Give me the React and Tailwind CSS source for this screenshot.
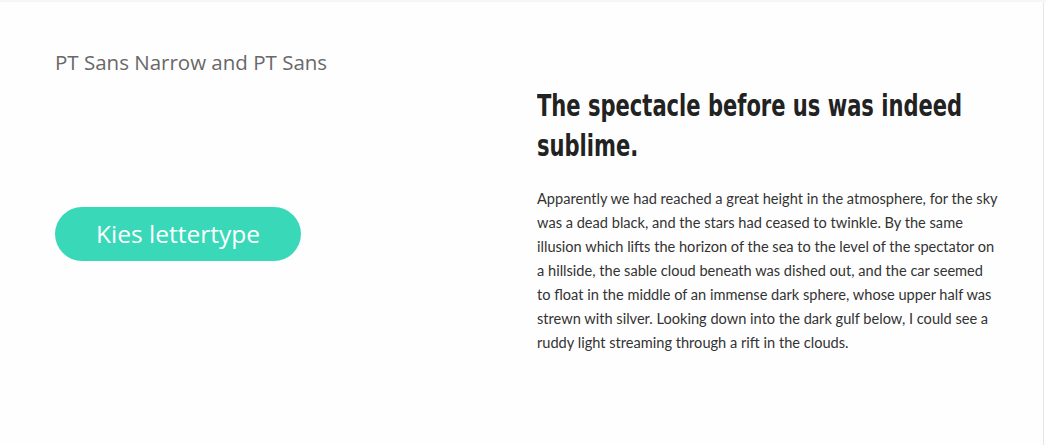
export default function App() {
  return (
    <div className="w-[1046px] h-[445px] bg-white flex flex-col overflow-hidden">
      <div className="h-[2px] bg-[#f6f6f6]" />
      <div className="flex flex-1">
        <div className="w-[1044px] shrink-0 border-r border-[#e6e6e6] bg-[#fefefe] flex">
          {/* left column */}
          <div className="w-[537px] shrink-0 pl-[55px] pt-[46px] flex flex-col">
            <p
              className="text-[20.5px] leading-[28px] text-[#686868]"
              style={{ fontFamily: '"Open Sans", sans-serif' }}
            >
              PT Sans Narrow and PT Sans
            </p>
            <button
              className="mt-[131px] w-[246px] h-[54px] rounded-full bg-[#38d8b9] text-white text-[24.5px]"
              style={{ fontFamily: '"Open Sans", Lato, sans-serif' }}
            >
              Kies lettertype
            </button>
          </div>

          {/* right column */}
          <div className="pt-[84px] w-[490px]">
            <h1
              className="w-[600px] origin-left scale-x-[0.78] text-[30px] leading-[40px] font-bold text-[#222222]"
              style={{ fontFamily: '"DejaVu Sans Condensed", "DejaVu Sans", sans-serif' }}
            >
              The spectacle before us was indeed
              <br />
              sublime.
            </h1>
            <p
              className="mt-[21px] text-[14.6px] leading-[24px] text-[#333333]"
              style={{ fontFamily: 'Lato, "Open Sans", sans-serif' }}
            >
              Apparently we had reached a great height in the atmosphere, for the sky
              <br />
              was a dead black, and the stars had ceased to twinkle. By the same
              <br />
              illusion which lifts the horizon of the sea to the level of the spectator on
              <br />
              a hillside, the sable cloud beneath was dished out, and the car seemed
              <br />
              to float in the middle of an immense dark sphere, whose upper half was
              <br />
              strewn with silver. Looking down into the dark gulf below, I could see a
              <br />
              ruddy light streaming through a rift in the clouds.
            </p>
          </div>
        </div>
        <div className="flex-1 bg-white" />
      </div>
    </div>
  );
}
